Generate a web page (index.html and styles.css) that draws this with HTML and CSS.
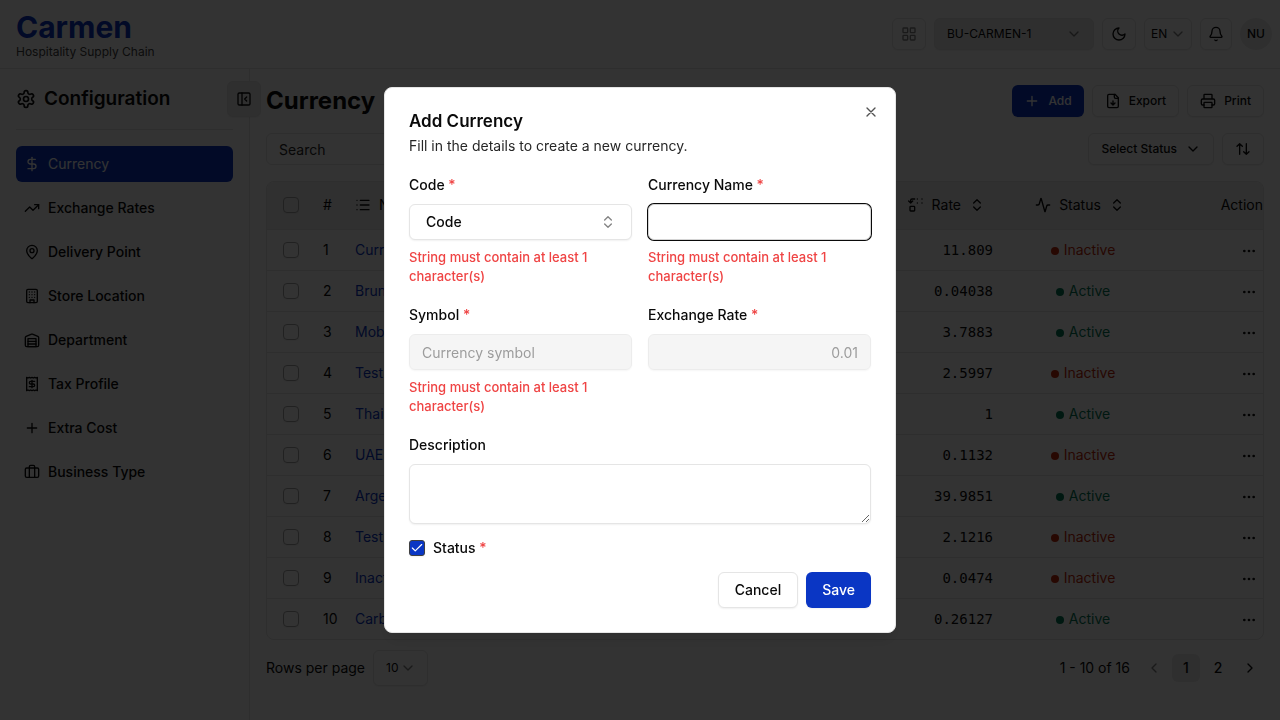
FILE: index.html
```html
<!DOCTYPE html>
<html lang="en">
<head>
<meta charset="utf-8">
<meta name="viewport" content="width=device-width, initial-scale=1">
<title>Currency - Carmen</title>
<link rel="stylesheet" href="styles.css">
</head>
<body>
<svg class="sprite" aria-hidden="true">
  <symbol id="grid" viewBox="0 0 24 24"><rect x="3" y="3" width="7" height="7" rx="1"/><rect x="14" y="3" width="7" height="7" rx="1"/><rect x="14" y="14" width="7" height="7" rx="1"/><rect x="3" y="14" width="7" height="7" rx="1"/></symbol>
  <symbol id="down" viewBox="0 0 24 24"><path d="m6 9 6 6 6-6"/></symbol>
  <symbol id="left" viewBox="0 0 24 24"><path d="m15 18-6-6 6-6"/></symbol>
  <symbol id="right" viewBox="0 0 24 24"><path d="m9 18 6-6-6-6"/></symbol>
  <symbol id="updown" viewBox="0 0 24 24"><path d="m7 15 5 5 5-5"/><path d="m7 9 5-5 5 5"/></symbol>
  <symbol id="moon" viewBox="0 0 24 24"><path d="M12 3a6 6 0 0 0 9 9 9 9 0 1 1-9-9Z"/></symbol>
  <symbol id="bell" viewBox="0 0 24 24"><path d="M10.268 21a2 2 0 0 0 3.464 0"/><path d="M3.262 15.326A1 1 0 0 0 4 17h16a1 1 0 0 0 .74-1.673C19.41 13.956 18 12.499 18 8A6 6 0 0 0 6 8c0 4.499-1.411 5.956-2.738 7.326"/></symbol>
  <symbol id="gear" viewBox="0 0 24 24"><path d="M12.22 2h-.44a2 2 0 0 0-2 2v.18a2 2 0 0 1-1 1.73l-.43.25a2 2 0 0 1-2 0l-.15-.08a2 2 0 0 0-2.73.73l-.22.38a2 2 0 0 0 .73 2.73l.15.1a2 2 0 0 1 1 1.72v.51a2 2 0 0 1-1 1.74l-.15.09a2 2 0 0 0-.73 2.73l.22.38a2 2 0 0 0 2.73.73l.15-.08a2 2 0 0 1 2 0l.43.25a2 2 0 0 1 1 1.73V20a2 2 0 0 0 2 2h.44a2 2 0 0 0 2-2v-.18a2 2 0 0 1 1-1.73l.43-.25a2 2 0 0 1 2 0l.15.08a2 2 0 0 0 2.73-.73l.22-.39a2 2 0 0 0-.73-2.73l-.15-.08a2 2 0 0 1-1-1.74v-.5a2 2 0 0 1 1-1.74l.15-.09a2 2 0 0 0 .73-2.73l-.22-.38a2 2 0 0 0-2.73-.73l-.15.08a2 2 0 0 1-2 0l-.43-.25a2 2 0 0 1-1-1.73V4a2 2 0 0 0-2-2z"/><circle cx="12" cy="12" r="3"/></symbol>
  <symbol id="panel" viewBox="0 0 24 24"><rect width="18" height="18" x="3" y="3" rx="2"/><path d="M9 3v18"/><path d="m16 15-3-3 3-3"/></symbol>
  <symbol id="dollar" viewBox="0 0 24 24"><path d="M12 2v20"/><path d="M17 5H9.500a3.500 3.500 0 0 0 0 7h5a3.500 3.500 0 0 1 0 7H6"/></symbol>
  <symbol id="trend" viewBox="0 0 24 24"><path d="m22 7-8.500 8.500-5-5L2 17"/><path d="M16 7h6v6"/></symbol>
  <symbol id="pin" viewBox="0 0 24 24"><path d="M20 10c0 4.993-5.539 10.193-7.399 11.799a1 1 0 0 1-1.202 0C9.539 20.193 4 14.993 4 10a8 8 0 0 1 16 0"/><circle cx="12" cy="10" r="3"/></symbol>
  <symbol id="building" viewBox="0 0 24 24"><rect width="16" height="20" x="4" y="2" rx="2"/><path d="M9 22v-4h6v4M8 6h.01M16 6h.01M12 6h.01M12 10h.01M12 14h.01M16 10h.01M16 14h.01M8 10h.01M8 14h.01"/></symbol>
  <symbol id="warehouse" viewBox="0 0 24 24"><path d="M22 8.350V20a2 2 0 0 1-2 2H4a2 2 0 0 1-2-2V8.350A2 2 0 0 1 3.260 6.500l8-3.200a2 2 0 0 1 1.480 0l8 3.200A2 2 0 0 1 22 8.350Z"/><path d="M6 18h12M6 14h12"/><rect width="12" height="12" x="6" y="10"/></symbol>
  <symbol id="receipt" viewBox="0 0 24 24"><path d="M4 2v20l2-1 2 1 2-1 2 1 2-1 2 1 2-1 2 1V2l-2 1-2-1-2 1-2-1-2 1-2-1-2 1Z"/><path d="M16 8h-6a2 2 0 1 0 0 4h4a2 2 0 1 1 0 4H8M12 17.500v-11"/></symbol>
  <symbol id="plus" viewBox="0 0 24 24"><path d="M5 12h14M12 5v14"/></symbol>
  <symbol id="case" viewBox="0 0 24 24"><path d="M16 20V4a2 2 0 0 0-2-2h-4a2 2 0 0 0-2 2v16"/><rect width="20" height="14" x="2" y="6" rx="2"/></symbol>
  <symbol id="filedown" viewBox="0 0 24 24"><path d="M15 2H6a2 2 0 0 0-2 2v16a2 2 0 0 0 2 2h12a2 2 0 0 0 2-2V7Z"/><path d="M14 2v4a2 2 0 0 0 2 2h4M12 18v-6M9 15l3 3 3-3"/></symbol>
  <symbol id="printer" viewBox="0 0 24 24"><path d="M6 18H4a2 2 0 0 1-2-2v-5a2 2 0 0 1 2-2h16a2 2 0 0 1 2 2v5a2 2 0 0 1-2 2h-2M6 9V3a1 1 0 0 1 1-1h10a1 1 0 0 1 1 1v6"/><rect x="6" y="14" width="12" height="8" rx="1"/></symbol>
  <symbol id="sort" viewBox="0 0 24 24"><path d="m3 8 4-4 4 4M7 4v16M21 16l-4 4-4-4M17 20V4"/></symbol>
  <symbol id="list" viewBox="0 0 24 24"><path d="M8 5h13M8 12h13M8 19h13M3 5h.01M3 12h.01M3 19h.01"/></symbol>
  <symbol id="ratio" viewBox="0 0 24 24"><path d="M10 3H6a2 2 0 0 0-2 2v4M1 6l3 3 3-3M14 3h.01M21 3h.01M14 9h.01M21 9h.01"/><rect x="3" y="14" width="7" height="7" rx="1"/></symbol>
  <symbol id="activity" viewBox="0 0 24 24"><path d="M22 12h-2.480a2 2 0 0 0-1.930 1.460l-2.350 8.360a.25.25 0 0 1-.48 0L9.240 2.180a.25.25 0 0 0-.48 0l-2.350 8.360A2 2 0 0 1 4.490 12H2"/></symbol>
  <symbol id="dots" viewBox="0 0 24 24"><circle cx="12" cy="12" r="1"/><circle cx="19" cy="12" r="1"/><circle cx="5" cy="12" r="1"/></symbol>
  <symbol id="close" viewBox="0 0 24 24"><path d="M18 6 6 18M6 6l12 12"/></symbol>
  <symbol id="check" viewBox="0 0 24 24"><path d="M20 6 9 17l-5-5"/></symbol>
</svg>

<div class="app">
  <header class="topbar">
    <div class="brand">
      <div class="brand-name">Carmen</div>
      <div class="brand-sub">Hospitality Supply Chain</div>
    </div>
    <div class="top-actions">
      <button class="btn icon-btn faint" aria-label="Apps"><svg class="icon"><use href="#grid"/></svg></button>
      <div class="select bu"><select aria-label="Business unit"><option>BU-CARMEN-1</option></select><svg class="icon"><use href="#down"/></svg></div>
      <button class="btn icon-btn" aria-label="Theme"><svg class="icon"><use href="#moon"/></svg></button>
      <div class="select lang"><select aria-label="Language"><option>EN</option></select><svg class="icon"><use href="#down"/></svg></div>
      <button class="btn icon-btn bell" aria-label="Notifications"><svg class="icon"><use href="#bell"/></svg></button>
      <button class="avatar">NU</button>
    </div>
  </header>
  <div class="body">
    <aside class="sidebar">
      <div class="side-head"><svg class="icon icon-lg"><use href="#gear"/></svg><h2>Configuration</h2></div>
      <button class="btn collapse" aria-label="Collapse sidebar"><svg class="icon"><use href="#panel"/></svg></button>
      <nav class="nav">
        <a class="active" href="#"><svg class="icon"><use href="#dollar"/></svg>Currency</a>
        <a href="#"><svg class="icon"><use href="#trend"/></svg>Exchange Rates</a>
        <a href="#"><svg class="icon"><use href="#pin"/></svg>Delivery Point</a>
        <a href="#"><svg class="icon"><use href="#building"/></svg>Store Location</a>
        <a href="#"><svg class="icon"><use href="#warehouse"/></svg>Department</a>
        <a href="#"><svg class="icon"><use href="#receipt"/></svg>Tax Profile</a>
        <a href="#"><svg class="icon"><use href="#plus"/></svg>Extra Cost</a>
        <a href="#"><svg class="icon"><use href="#case"/></svg>Business Type</a>
      </nav>
    </aside>
    <main class="main">
      <div class="row">
        <h1>Currency</h1>
        <div class="group">
          <button class="btn primary"><svg class="icon"><use href="#plus"/></svg>Add</button>
          <button class="btn"><svg class="icon"><use href="#filedown"/></svg>Export</button>
          <button class="btn"><svg class="icon"><use href="#printer"/></svg>Print</button>
        </div>
      </div>
      <div class="row filters">
        <input class="search" type="search" placeholder="Search" aria-label="Search">
        <div class="group">
          <button class="btn">Select Status<svg class="icon"><use href="#down"/></svg></button>
          <button class="btn sort" aria-label="Sort"><svg class="icon"><use href="#sort"/></svg></button>
        </div>
      </div>
      <div class="table-wrap">
        <table>
          <colgroup><col class="c-check"><col class="c-num"><col><col class="c-rate"><col class="c-status"><col class="c-action"></colgroup>
          <thead><tr>
            <th><input type="checkbox" aria-label="Select all"></th>
            <th class="num">#</th>
            <th><span class="th"><svg class="icon"><use href="#list"/></svg>Name</span></th>
            <th><span class="th end"><svg class="icon"><use href="#ratio"/></svg>Rate<svg class="icon"><use href="#updown"/></svg></span></th>
            <th><span class="th mid"><svg class="icon"><use href="#activity"/></svg>Status<svg class="icon"><use href="#updown"/></svg></span></th>
            <th class="act">Action</th>
          </tr></thead>
          <tbody>
            <tr><td><input type="checkbox" aria-label="Select row 1"></td><td class="num">1</td><td><a href="#">Currency</a></td><td class="rate">11.809</td><td class="status off"><span>Inactive</span></td><td class="act"><button class="more" aria-label="Actions"><svg class="icon"><use href="#dots"/></svg></button></td></tr>
            <tr><td><input type="checkbox" aria-label="Select row 2"></td><td class="num">2</td><td><a href="#">Brunei</a></td><td class="rate">0.04038</td><td class="status on"><span>Active</span></td><td class="act"><button class="more" aria-label="Actions"><svg class="icon"><use href="#dots"/></svg></button></td></tr>
            <tr><td><input type="checkbox" aria-label="Select row 3"></td><td class="num">3</td><td><a href="#">Mobile</a></td><td class="rate">3.7883</td><td class="status on"><span>Active</span></td><td class="act"><button class="more" aria-label="Actions"><svg class="icon"><use href="#dots"/></svg></button></td></tr>
            <tr><td><input type="checkbox" aria-label="Select row 4"></td><td class="num">4</td><td><a href="#">Test</a></td><td class="rate">2.5997</td><td class="status off"><span>Inactive</span></td><td class="act"><button class="more" aria-label="Actions"><svg class="icon"><use href="#dots"/></svg></button></td></tr>
            <tr><td><input type="checkbox" aria-label="Select row 5"></td><td class="num">5</td><td><a href="#">Thai</a></td><td class="rate">1</td><td class="status on"><span>Active</span></td><td class="act"><button class="more" aria-label="Actions"><svg class="icon"><use href="#dots"/></svg></button></td></tr>
            <tr><td><input type="checkbox" aria-label="Select row 6"></td><td class="num">6</td><td><a href="#">UAE</a></td><td class="rate">0.1132</td><td class="status off"><span>Inactive</span></td><td class="act"><button class="more" aria-label="Actions"><svg class="icon"><use href="#dots"/></svg></button></td></tr>
            <tr><td><input type="checkbox" aria-label="Select row 7"></td><td class="num">7</td><td><a href="#">Argentine</a></td><td class="rate">39.9851</td><td class="status on"><span>Active</span></td><td class="act"><button class="more" aria-label="Actions"><svg class="icon"><use href="#dots"/></svg></button></td></tr>
            <tr><td><input type="checkbox" aria-label="Select row 8"></td><td class="num">8</td><td><a href="#">Test</a></td><td class="rate">2.1216</td><td class="status off"><span>Inactive</span></td><td class="act"><button class="more" aria-label="Actions"><svg class="icon"><use href="#dots"/></svg></button></td></tr>
            <tr><td><input type="checkbox" aria-label="Select row 9"></td><td class="num">9</td><td><a href="#">Inactive</a></td><td class="rate">0.0474</td><td class="status off"><span>Inactive</span></td><td class="act"><button class="more" aria-label="Actions"><svg class="icon"><use href="#dots"/></svg></button></td></tr>
            <tr><td><input type="checkbox" aria-label="Select row 10"></td><td class="num">10</td><td><a href="#">Carbon</a></td><td class="rate">0.26127</td><td class="status on"><span>Active</span></td><td class="act"><button class="more" aria-label="Actions"><svg class="icon"><use href="#dots"/></svg></button></td></tr>
          </tbody>
        </table>
      </div>
      <div class="row pager">
        <div class="per-page"><label for="rows">Rows per page</label><div class="select rows"><select id="rows"><option>10</option></select><svg class="icon"><use href="#down"/></svg></div></div>
        <div class="pages">
          <span class="range">1 - 10 of 16</span>
          <button class="page faint" aria-label="Previous"><svg class="icon"><use href="#left"/></svg></button>
          <button class="page current">1</button>
          <button class="page">2</button>
          <button class="page" aria-label="Next"><svg class="icon"><use href="#right"/></svg></button>
        </div>
      </div>
    </main>
  </div>
</div>

<div class="overlay">
  <section class="dialog" role="dialog" aria-modal="true" aria-labelledby="dlg-title">
    <button class="close" aria-label="Close"><svg class="icon"><use href="#close"/></svg></button>
    <div class="dlg-head">
      <h2 id="dlg-title">Add Currency</h2>
      <p>Fill in the details to create a new currency.</p>
    </div>
    <form class="form">
      <div class="fields">
        <div class="field">
          <label for="code">Code <span class="req">*</span></label>
          <div class="select code"><select id="code"><option>Code</option></select><svg class="icon"><use href="#updown"/></svg></div>
          <p class="error">String must contain at least 1 character(s)</p>
        </div>
        <div class="field">
          <label for="name">Currency Name <span class="req">*</span></label>
          <input class="input focused" id="name" type="text">
          <p class="error">String must contain at least 1 character(s)</p>
        </div>
        <div class="field">
          <label for="symbol">Symbol <span class="req">*</span></label>
          <input class="input" id="symbol" type="text" placeholder="Currency symbol" disabled>
          <p class="error">String must contain at least 1 character(s)</p>
        </div>
        <div class="field">
          <label for="rate">Exchange Rate <span class="req">*</span></label>
          <input class="input right" id="rate" type="text" placeholder="0.01" disabled>
        </div>
      </div>
      <div class="field">
        <label for="desc">Description</label>
        <textarea class="input" id="desc"></textarea>
      </div>
      <div class="check-row">
        <span class="check"><input type="checkbox" id="status" checked><svg class="icon"><use href="#check"/></svg></span>
        <label for="status">Status <span class="req">*</span></label>
      </div>
      <div class="dlg-actions">
        <button class="btn" type="button">Cancel</button>
        <button class="btn primary" type="submit">Save</button>
      </div>
    </form>
  </section>
</div>
</body>
</html>
```
FILE: styles.css
```css
*, *::before, *::after { box-sizing: border-box; }
:root {
  --fg: #0a0a0a;
  --line: #e5e5e5;
  --muted: #f0f0f0;
  --accent: #ebebeb;
  --primary: #0a36c4;
  --danger: #ef4444;
  --shadow: 0 1px 2px rgba(0, 0, 0, .06);
}
body {
  margin: 0;
  font: 14px/20px Inter, "Liberation Sans", sans-serif;
  color: var(--fg);
  background: #fff;
}
h1, h2, p { margin: 0; }
button, input, select, textarea { font: inherit; color: inherit; }
a { color: inherit; text-decoration: none; }
.sprite { position: absolute; width: 0; height: 0; }
.icon {
  width: 16px; height: 16px; flex: none;
  fill: none; stroke: currentColor; stroke-width: 2;
  stroke-linecap: round; stroke-linejoin: round;
}
.icon-lg { width: 20px; height: 20px; }

.btn {
  display: inline-flex; align-items: center; justify-content: center; gap: 8px;
  height: 32px; padding: 0 12px;
  font-size: 12px; font-weight: 500;
  background: #fff; border: 1px solid var(--line); border-radius: 6px;
  box-shadow: var(--shadow);
}
.btn.primary { color: #fff; background: var(--primary); border: 0; }
.icon-btn { width: 34px; padding: 0; }
.faint .icon { opacity: .5; }
.select { position: relative; display: flex; align-items: center; }
.select select {
  appearance: none; width: 100%; height: 32px; padding: 0 12px;
  background: #fff; border: 1px solid var(--line); border-radius: 6px;
  box-shadow: var(--shadow); font-size: 12px;
}
.select .icon { position: absolute; right: 12px; opacity: .5; pointer-events: none; }

.app { min-height: 100vh; display: flex; flex-direction: column; }
.topbar {
  display: flex; align-items: center; justify-content: space-between;
  height: 69px; padding: 0 8px 0 16px; border-bottom: 1px solid var(--line);
}
.brand { padding-top: 2px; }
.brand-name { font-size: 30px; line-height: 34px; font-weight: 700; color: var(--primary); }
.brand-sub { font-size: 12px; line-height: 16px; color: #404040; }
.top-actions { display: flex; gap: 8px; }
.bu { width: 160px; }
.bu select { background: var(--accent); }
.lang { width: 48px; }
.lang select { padding: 0 6px; }
.lang .icon { right: 6px; }
.bell { width: 32px; }
.avatar {
  width: 32px; height: 32px; padding: 0; border: 0; border-radius: 50%;
  background: var(--accent); font-size: 12px; font-weight: 500;
}

.body { flex: 1; display: flex; }
.sidebar { position: relative; width: 250px; flex: none; padding: 0 16px; border-right: 1px solid var(--line); }
.side-head { display: flex; align-items: center; gap: 8px; height: 61px; border-bottom: 1px solid var(--line); }
.side-head h2 { font-size: 19px; line-height: 28px; font-weight: 600; }
.collapse { position: absolute; top: 12px; right: -12px; width: 34px; height: 36px; padding: 0; background: var(--accent); }
.nav { display: flex; flex-direction: column; gap: 8px; padding-top: 16px; }
.nav a { display: flex; align-items: center; gap: 8px; height: 36px; padding: 0 8px; border-radius: 6px; font-weight: 500; }
.nav .active { color: #fff; background: var(--primary); font-weight: 400; }

.main { flex: 1; min-width: 0; padding: 16px; }
.row { display: flex; align-items: center; justify-content: space-between; }
.group { display: flex; gap: 8px; }
h1 { font-size: 24px; line-height: 32px; font-weight: 700; }
.filters { padding: 16px 0; }
.search { width: 320px; height: 32px; padding: 0 12px; background: #fff; border: 1px solid var(--line); border-radius: 6px; }
.search::placeholder { color: #262626; opacity: 1; }
.sort { width: 42px; padding: 0; }

.table-wrap { border: 1px solid var(--line); border-radius: 8px; overflow: hidden; }
table { width: 100%; border-collapse: collapse; table-layout: fixed; }
.c-check { width: 48px; }
.c-num { width: 32px; }
.c-rate { width: 120px; }
.c-status { width: 180px; }
.c-action { width: 90px; }
thead { background: var(--muted); }
th, td { padding: 0 8px; text-align: left; font-weight: 400; white-space: nowrap; }
th { height: 47px; }
td { height: 41px; border-top: 1px solid var(--line); }
td a { color: var(--primary); }
th input, td input {
  appearance: none; display: block; width: 16px; height: 16px; margin: 0 auto;
  border: 1px solid #a3a3a3; border-radius: 4px; box-shadow: var(--shadow);
}
.th { display: flex; align-items: center; gap: 8px; }
.th.end { justify-content: flex-end; }
.th.mid { justify-content: center; padding-right: 6px; }
.rate { padding: 0; font-family: "DejaVu Sans Mono", monospace; text-align: right; }
.status { text-align: center; }
.status span::before {
  content: ""; display: inline-block; width: 8px; height: 8px; margin-right: 5px;
  border-radius: 50%; background: currentColor;
}
.on { color: #047857; }
.off { color: #c2290a; }
.act { padding: 0 0 0 8px; text-align: right; }
.more { display: inline-flex; padding: 0 6px; border: 0; background: none; vertical-align: middle; }

.pager { padding-top: 10px; }
.per-page { display: flex; align-items: center; gap: 8px; }
.rows { width: 55px; }
.rows select { height: 36px; }
.pages { display: flex; align-items: center; gap: 4px; }
.range { padding-right: 6px; }
.page {
  display: inline-flex; align-items: center; justify-content: center;
  width: 28px; height: 28px; padding: 0; border: 0; border-radius: 6px; background: none; font-weight: 500;
}
.page.current { background: var(--accent); }

.overlay {
  position: fixed; inset: 0; display: flex; align-items: center; justify-content: center;
  background: rgba(0, 0, 0, .8);
}
.dialog {
  position: relative; width: 100%; max-width: 512px; padding: 24px;
  background: #fff; border: 1px solid var(--line); border-radius: 8px;
  box-shadow: 0 10px 15px -3px rgba(0, 0, 0, .1);
}
.close { position: absolute; top: 16px; right: 16px; display: flex; padding: 0; border: 0; background: none; opacity: .7; }
.dlg-head { display: flex; flex-direction: column; gap: 6px; padding-bottom: 17px; }
.dlg-head h2 { font-size: 17px; line-height: 18px; font-weight: 600; }
.dlg-head p { color: #262626; }
.form { display: flex; flex-direction: column; gap: 16px; }
.fields { display: grid; grid-template-columns: 1fr 1fr; gap: 16px; }
.field { display: flex; flex-direction: column; gap: 8px; }
.field label { line-height: 23px; font-weight: 500; }
.req { color: var(--danger); }
.error { font-size: 13px; line-height: 19px; min-height: 39px; font-weight: 500; color: var(--danger); }
.input { width: 100%; height: 36px; padding: 0 12px; background: #fff; border: 1px solid var(--line); border-radius: 6px; box-shadow: var(--shadow); }
.input::placeholder { color: #737373; opacity: 1; }
.input:disabled { background: #f2f2f2; opacity: .7; }
.input.focused { outline: 0; border-color: #d4d4d4; box-shadow: 0 0 0 1px var(--fg); }
.input.right { text-align: right; }
textarea.input { display: block; height: 60px; padding: 8px 12px; resize: vertical; }
.code select { height: 36px; padding: 0 16px; font-size: 14px; font-weight: 500; }
.code .icon { right: 16px; }
.check-row { display: flex; align-items: center; gap: 8px; height: 16px; font-weight: 500; }
.check { position: relative; display: flex; }
.check input { appearance: none; width: 16px; height: 16px; margin: 0; border: 1px solid #404040; border-radius: 3px; background: var(--primary); box-shadow: var(--shadow); }
.check .icon { position: absolute; inset: 0; padding: 1px; color: #fff; pointer-events: none; }
.dlg-actions { display: flex; justify-content: flex-end; gap: 8px; }
.dlg-actions .btn { height: 36px; padding: 0 16px; font-size: 14px; }
```
